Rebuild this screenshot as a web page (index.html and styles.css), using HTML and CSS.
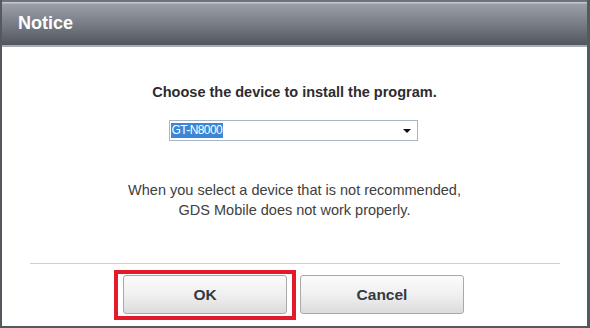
FILE: index.html
```html
<!DOCTYPE html>
<html>
<head>
<meta charset="utf-8">
<link rel="stylesheet" href="styles.css">
</head>
<body>
<div class="window">
  <div class="titlebar"><span class="title">Notice</span></div>
  <div class="content">
    <h1 class="heading">Choose the device to install the program.</h1>
    <div class="select">
      <span class="select-value">GT-N8000</span>
      <span class="select-arrow"></span>
    </div>
    <p class="message">When you select a device that is not recommended,<br>GDS Mobile does not work properly.</p>
    <div class="separator"></div>
    <div class="buttons">
      <div class="highlight"><button class="btn">OK</button></div>
      <button class="btn">Cancel</button>
    </div>
  </div>
</div>
</body>
</html>
```
FILE: styles.css
```css
html, body {
  margin: 0;
  padding: 0;
  background: #ffffff;
}
.window {
  box-sizing: border-box;
  width: 590px;
  height: 328px;
  border-left: 2px solid #55595f;
  border-right: 3px solid #55595f;
  border-bottom: 2px solid #55595f;
  display: flex;
  flex-direction: column;
  font-family: "Liberation Sans", Arial, sans-serif;
  background: #ffffff;
}
.titlebar {
  box-sizing: border-box;
  height: 47px;
  border-top: 2px solid #6e737a;
  border-bottom: 2px solid #a9acb1;
  background: linear-gradient(#c3c7cc 0px, #c3c7cc 1px, #9a9fa7 2px, #7b8089 20px, #50555e 43px);
  display: flex;
  align-items: flex-start;
  padding-left: 16px;
}
.title {
  color: #ffffff;
  font-weight: bold;
  font-size: 18px;
  line-height: 21px;
  margin-top: 11px;
}
.content {
  flex: 1;
  display: flex;
  flex-direction: column;
  align-items: center;
  padding-top: 37px;
}
.heading {
  margin: 0;
  font-size: 14.5px;
  line-height: 17px;
  font-weight: bold;
  color: #2c2c30;
}
.select {
  box-sizing: border-box;
  margin-top: 19px;
  width: 249px;
  height: 21px;
  border: 1px solid #a7b5c6;
  display: flex;
  align-items: center;
  padding: 0 6px 0 1px;
  margin-left: -3px;
}
.select-value {
  background: #3c86d8;
  color: #ffffff;
  font-size: 12px;
  line-height: 15px;
  padding: 0 1px 0 1px;
  letter-spacing: -0.6px;
}
.select-arrow {
  margin-left: auto;
  width: 0;
  height: 0;
  border-left: 4px solid transparent;
  border-right: 4px solid transparent;
  border-top: 4px solid #111111;
}
.message {
  margin: 39px 0 0 0;
  font-size: 14.5px;
  line-height: 20px;
  color: #404040;
  text-align: center;
}
.separator {
  align-self: stretch;
  margin: 43px 27px 0 28px;
  height: 1px;
  background: #cfcfcf;
}
.buttons {
  display: flex;
  align-items: flex-start;
  margin-top: 6px;
  margin-left: -11px;
  gap: 4px;
}
.highlight {
  border: 4px solid #e31a2a;
  padding: 1px 5px 2px 5px;
  display: flex;
}
.btn {
  box-sizing: border-box;
  width: 164px;
  height: 39px;
  border: 1px solid #a9a9a9;
  border-radius: 3px;
  background: linear-gradient(#fbfbfb, #f0f0f0 50%, #dcdcdc);
  font-family: "Liberation Sans", Arial, sans-serif;
  font-weight: bold;
  font-size: 15.5px;
  color: #333a44;
  padding: 0;
  margin-top: 0;
}
.buttons > .btn {
  margin-top: 5px;
}
```
